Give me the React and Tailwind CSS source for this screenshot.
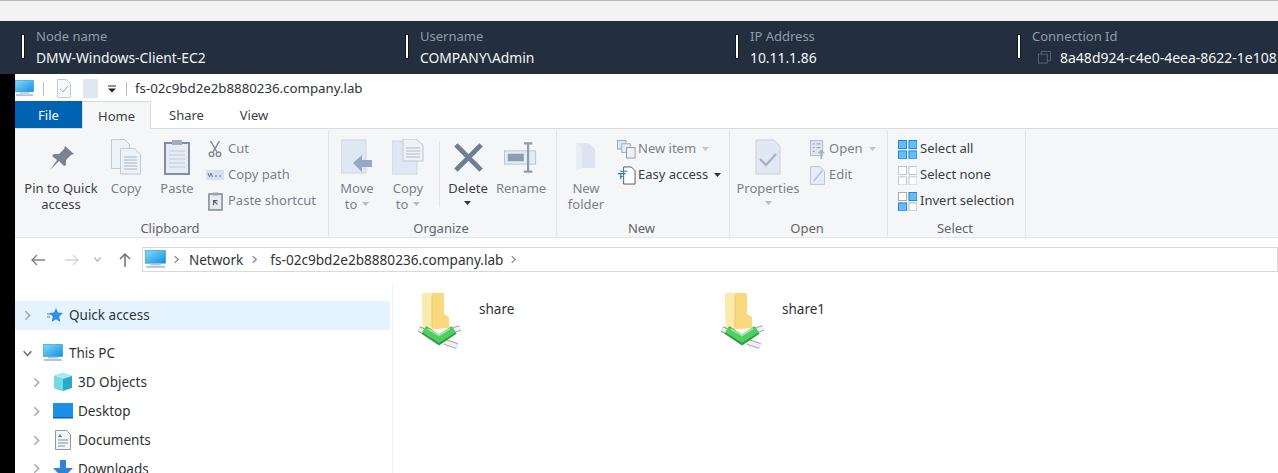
import React from 'react'

const font = 'font-["Noto_Sans","Open_Sans",sans-serif]'

function PcIcon({ className = 'w-5 h-5' }) {
  return (
    <svg viewBox="0 0 20 20" className={className}>
      <defs>
        <linearGradient id="pcScreen" x1="0" y1="0" x2="1" y2="1">
          <stop offset="0" stopColor="#7fdcfb" />
          <stop offset="1" stopColor="#1590e0" />
        </linearGradient>
      </defs>
      <rect x="0.5" y="1.5" width="19" height="12" fill="url(#pcScreen)" stroke="#2b8fd0" strokeWidth="0.6" />
      <rect x="5" y="14" width="10" height="1.5" fill="#b9c6d3" />
      <rect x="1" y="16" width="18" height="2" fill="#b5c4d4" />
    </svg>
  )
}

function Chevron({ className = '', down = false, color = '#a6a6a6' }) {
  return (
    <svg viewBox="0 0 10 10" className={className} fill="none" stroke={color} strokeWidth="1.3">
      {down ? <path d="M1.5 3 5 6.8 8.5 3" /> : <path d="M3 1.2 7 5 3 8.8" />}
    </svg>
  )
}

function Caret({ className = '', color = '#b8bdc2' }) {
  return (
    <svg viewBox="0 0 7 4" className={`w-[7px] h-1 ${className}`}>
      <path d="M0 0h7L3.5 4z" fill={color} />
    </svg>
  )
}

function HeaderField({ width, label, value, copy }) {
  return (
    <div className="flex shrink-0 items-center" style={{ width }}>
      <div className="w-[2px] h-[23px] bg-white shadow-[0_0_0_1px_#10161f] mr-[12px] shrink-0" />
      <div className="flex flex-col whitespace-nowrap">
        <span className="text-[13px] leading-[22px] text-[#8f9ca8]">{label}</span>
        <span className={`${copy ? 'text-[14px]' : 'text-[13.850px]'} leading-[22px] text-[#f3f5f6] flex items-center`}>
          {copy && (
            <svg viewBox="0 0 14 14" className="w-[13px] h-[13px] ml-[6px] mr-[9px]" fill="none" stroke="#5c6975" strokeWidth="1">
              <rect x="0.5" y="3.5" width="9.5" height="9.5" />
              <path d="M3.5 3.5v-3h10v10h-3.5" />
            </svg>
          )}
          {value}
        </span>
      </div>
    </div>
  )
}

function PinIcon() {
  return (
    <svg viewBox="0 0 26 24" className="w-[26px] h-6 mt-[2px]">
      <path d="M17 0l9 8-3 1-5 5 0 5-2 1-5-5-9 9 7-10-5-4 2-2 5 0 5-5z" fill="#7b848e" />
    </svg>
  )
}

function CopyIcon() {
  return (
    <svg viewBox="0 0 30 36" className="w-[30px] h-9" fill="#edf1f8" stroke="#c0cad8">
      <path d="M0.500 0.500h13l5 5v24h-18z" />
      <path d="M9.500 9.500h14l6 6v19.500h-20z" />
      <path d="M13 18h13M13 21h13M13 24h13M13 27h13M13 30h13" stroke="#a9b4c3" />
    </svg>
  )
}

function PasteIcon() {
  return (
    <svg viewBox="0 0 26 36" className="w-[26px] h-9">
      <rect x="1" y="4" width="24" height="31" fill="#e6ecf5" stroke="#7f8ea3" strokeWidth="2" />
      <rect x="8" y="1" width="10" height="5" fill="#a3aebd" />
      <path d="M5 12h16M5 16h16M5 20h16M5 24h16M5 28h16" stroke="#c2cad5" />
    </svg>
  )
}

function MoveIcon() {
  return (
    <svg viewBox="0 0 32 36" className="w-8 h-9">
      <rect x="0" y="1" width="25" height="33" fill="#dfe7f3" stroke="#cdd6e2" />
      <path d="M12 24l9-8v5h10v7H21v5z" fill="#97a9c2" />
    </svg>
  )
}

function CopyToIcon() {
  return (
    <svg viewBox="0 0 32 36" className="w-8 h-9">
      <rect x="0" y="2" width="25" height="33" fill="#dfe7f3" stroke="#cdd6e2" />
      <path d="M11 0h13l7 6v16H11z" fill="#eef2f7" stroke="#bcc6d2" />
      <path d="M14 9h14M14 12h14M14 15h14M14 18h14" stroke="#b0bac6" />
    </svg>
  )
}

function DeleteIcon() {
  return (
    <svg viewBox="0 0 32 32" className="w-[31px] h-[31px]" fill="none" stroke="#6e7f95" strokeWidth="5">
      <path d="M3 3l26 26M29 3L3 29" />
    </svg>
  )
}

function RenameIcon() {
  return (
    <svg viewBox="0 0 36 32" className="w-[34px] h-[31px]">
      <rect x="0.5" y="9" width="33" height="14" fill="#e6ecf4" stroke="#b8c4d2" />
      <rect x="4" y="12" width="17" height="8" fill="#8d9cb0" />
      <path d="M21 1h9M21 31h9M25.5 1v30" stroke="#8d9cb0" strokeWidth="2.4" fill="none" />
    </svg>
  )
}

function FolderIcon() {
  return (
    <svg viewBox="0 0 24 32" className="w-[23px] h-[31px]">
      <path d="M1 1h13l7 6v20H7l-6 3z" fill="#dbe4f0" />
      <path d="M1 1l6 5v21l-6 3z" fill="#e9eef6" />
    </svg>
  )
}

function PropertiesIcon() {
  return (
    <svg viewBox="0 0 26 36" className="w-[26px] h-9">
      <path d="M1 1h18l6 6v28H1z" fill="#e1e8f3" stroke="#c5d0de" />
      <path d="M5 20l6 6 10-11" fill="none" stroke="#a9b3bf" strokeWidth="2.4" />
    </svg>
  )
}

function LargeButton({ width, icon, lines, caret, disabled = true }) {
  return (
    <div className="flex flex-col items-center shrink-0" style={{ width }}>
      <div className="h-[42px] mt-[5px] flex items-center justify-center">{icon}</div>
      <div className={`mt-[2px] text-[13px] leading-[16px] text-center whitespace-nowrap ${disabled ? 'text-[#79828c]' : 'text-[#3a3f44]'}`}>
        {lines.map((l, i) => (
          <div key={i} className="flex items-center justify-center gap-[5px]">
            {l}
            {caret === 'inline' && i === lines.length - 1 && <Caret />}
          </div>
        ))}
        {caret === 'below' && (
          <div className="flex justify-center pt-[5px]">
            <Caret color={disabled ? '#b8bdc2' : '#333'} />
          </div>
        )}
      </div>
    </div>
  )
}

function SmallRow({ icon, label, caret, dark, iconWidth = 'w-[26px]' }) {
  return (
    <div className="flex h-[26px] items-center whitespace-nowrap">
      <div className={`${iconWidth} flex justify-center shrink-0`}>{icon}</div>
      <span className={`text-[13px] ${dark ? 'text-[#3a3f44]' : 'text-[#79828c]'}`}>{label}</span>
      {caret && <Caret className="ml-[6px]" color={dark ? '#333' : '#c2c6ca'} />}
    </div>
  )
}

function Group({ width, label, children }) {
  return (
    <div className="flex flex-col shrink-0 h-[106px] border-r border-[#e2e4e7]" style={{ width }}>
      <div className="flex h-[90px]">{children}</div>
      <div className="text-[13px] leading-[18px] text-center text-[#5e656c] pr-[3px]">{label}</div>
    </div>
  )
}

const Cut = (
  <svg viewBox="0 0 16 20" className="w-[14px] h-[18px]" fill="none" stroke="#7f8994" strokeWidth="1.6">
    <path d="M3 1l7 12M13 1L6 13" />
    <circle cx="4" cy="16" r="2.6" />
    <circle cx="12" cy="16" r="2.6" />
  </svg>
)
const CopyPath = (
  <svg viewBox="0 0 18 10" className="w-[18px] h-[10px]">
    <rect width="18" height="10" fill="#d7dff0" />
    <path d="M2 3l1.5 4L5 3l1.5 4M9 6h2M13 6h2" stroke="#6c7c9c" fill="none" />
  </svg>
)
const PasteShortcut = (
  <svg viewBox="0 0 16 20" className="w-[15px] h-[19px]">
    <rect x="1" y="2" width="14" height="17" fill="#e5ebf3" stroke="#76828f" strokeWidth="1.5" />
    <rect x="5" y="0.5" width="6" height="3" fill="#98a2ad" />
    <path d="M6 14V9h4M6 9l4 4" stroke="#57616c" strokeWidth="1.3" fill="none" />
  </svg>
)
const NewItem = (
  <svg viewBox="0 0 20 20" className="w-[19px] h-[19px]">
    <rect x="0.5" y="0.5" width="9" height="9" fill="#dfe6f0" stroke="#9aa6b5" />
    <rect x="5" y="4" width="9" height="9" fill="#e9eef5" stroke="#9aa6b5" />
    <rect x="10" y="8" width="9" height="11" fill="#eef2f7" stroke="#8e9aa9" />
  </svg>
)
const EasyAccess = (
  <svg viewBox="0 0 20 20" className="w-[19px] h-[19px]">
    <path d="M7 1h8l4 4v14H7z" fill="#fff" stroke="#555" />
    <path d="M1 8h8M3 5.500h8M3 11h3M4 8v6" stroke="#1d7fd0" strokeWidth="1.2" fill="none" />
  </svg>
)
const OpenIcon = (
  <svg viewBox="0 0 16 20" className="w-[15px] h-[19px]">
    <rect x="0.5" y="0.5" width="13" height="16" fill="#dfe6f0" stroke="#b0bbc9" />
    <path d="M3 4h2M3 8h2M3 12h2M7 4h4M7 8h4" stroke="#8493a5" />
    <path d="M11 20v-6H8l4-4 4 4h-3v6z" fill="#a5b3c5" />
  </svg>
)
const EditIcon = (
  <svg viewBox="0 0 16 20" className="w-[15px] h-[19px]">
    <path d="M0.500 0.500h10l5 5v14H0.500z" fill="#e8edf5" stroke="#b6c1cf" />
    <path d="M4 16L13 5" stroke="#b4c1d1" strokeWidth="1.6" />
  </svg>
)

function GridIcon({ cells, light }) {
  return (
    <svg viewBox="0 0 20 20" className="w-[19px] h-[19px]">
      {[[0, 0], [11, 0], [0, 11], [11, 11]].map(([x, y], i) => (
        <rect
          key={i}
          x={x + 0.5}
          y={y + 0.5}
          width="8.5"
          height="8.5"
          fill={cells[i] ? '#67bdf3' : '#fff'}
          stroke={cells[i] ? '#1b86d3' : light ? '#c4c4c4' : '#a9a9a9'}
        />
      ))}
    </svg>
  )
}

function NavRow({ indent, open, icon, label, bg, iconPad = 'pr-[6px]' }) {
  return (
    <div className={`flex items-center h-[28.900px] ${bg || ''}`}>
      <div className={`flex shrink-0 ${indent ? 'w-[33px] pl-[16px]' : 'w-[24px] pl-[7px]'}`}>
        <Chevron className="w-[11px] h-[11px]" down={open} color={open ? '#666' : '#a6a6a6'} />
      </div>
      <div className={`w-[30px] ${iconPad} flex justify-end shrink-0`}>{icon}</div>
      <span className="text-[13.500px] text-[#2f3338] whitespace-nowrap">{label}</span>
    </div>
  )
}

function ShareItem({ label }) {
  return (
    <div className="flex w-[303px] shrink-0">
      <svg viewBox="0 0 44 60" className="w-[44px] h-[60px] shrink-0">
        <path d="M4 2h22v21l5 3v11L8 39H5z" fill="#f8d97f" />
        <path d="M4 2h10v35l-6 2H5z" fill="#fce9ad" />
        <path d="M14 5v31" stroke="#efc868" strokeWidth="1" />
        <path d="M1 38l6 3M36 39l6-2M27 51l12 4" stroke="#8f9793" strokeWidth="6" fill="none" />
        <path d="M1 38l6 3M36 39l6-2M27 51l12 4" stroke="#eef1ef" strokeWidth="4" fill="none" />
        <path d="M6 39l15 10 15-10" fill="none" stroke="#2f9e45" strokeWidth="9" />
        <path d="M6 38.500l15 9.500 15-9.500" fill="none" stroke="#4fcf60" strokeWidth="6.500" />
        <path d="M10 38l11 6.500 11-7" fill="none" stroke="#9be8a5" strokeWidth="1.500" />
      </svg>
      <span className="ml-[17px] mt-[9px] text-[13.500px] leading-[18px] text-[#2f3338]">{label}</span>
    </div>
  )
}

export default function App() {
  return (
    <div className={`w-[1278px] h-[473px] overflow-hidden bg-white flex flex-col ${font}`}>
      {/* browser strip */}
      <div className="h-[21px] shrink-0 bg-[#f3f3f3] border-t border-[#b9bcbe]" />

      {/* session header */}
      <div className="h-[53px] shrink-0 bg-[#232f3e] flex items-center pl-[22px] pb-[2px] overflow-hidden">
        <HeaderField width={384} label="Node name" value="DMW-Windows-Client-EC2" />
        <HeaderField width={330} label="Username" value="COMPANY\Admin" />
        <HeaderField width={282} label="IP Address" value="10.11.1.86" />
        <HeaderField width={260} label="Connection Id" value="8a48d924-c4e0-4eea-8622-1e108" copy />
      </div>

      <div className="flex flex-1 min-h-0">
        <div className="w-[15px] shrink-0 bg-black" />
        <div className="flex-1 min-w-0 flex flex-col">
          {/* title bar */}
          <div className="h-[27px] shrink-0 flex items-center pt-[2px]">
            <PcIcon className="w-[19px] h-[19px]" />
            <div className="w-px h-[14px] bg-[#bdbdbd] ml-[9px]" />
            <svg viewBox="0 0 14 19" className="w-[14px] h-[19px] ml-[13px]" fill="none">
              <path d="M0.500 0.500h9l4 4v14h-13z" fill="#f5f7fa" stroke="#c2ccd8" />
              <path d="M3 10l3 3 5-6" stroke="#a7b1bd" />
            </svg>
            <div className="w-[15px] h-[19px] bg-[#dfe7f3] ml-[12px]" />
            <svg viewBox="0 0 8 8" className="w-2 h-2 ml-[10px]">
              <path d="M0 1h8" stroke="#222" />
              <path d="M0 3.500h8L4 7.500z" fill="#222" />
            </svg>
            <div className="w-px h-[14px] bg-[#bdbdbd] ml-[10px]" />
            <span className="ml-2 text-[13.270px] text-[#2f3338]">fs-02c9bd2e2b8880236.company.lab</span>
          </div>

          {/* tabs */}
          <div className="h-[28px] shrink-0 flex border-b border-[#dadbdc] text-[13px]">
            <div className="w-[67px] bg-[#0063b1] text-white flex items-center justify-center pt-[2px]">File</div>
            <div className="w-[69px] h-[28px] bg-[#f5f6f7] border-x border-t border-[#dadbdc] flex items-center justify-center text-[#3a3f44] pt-[2px]">Home</div>
            <div className="w-[71px] flex items-center justify-center text-[#3a3f44] pt-[2px]">Share</div>
            <div className="w-[64px] flex items-center justify-center text-[#3a3f44] pt-[2px]">View</div>
          </div>

          {/* ribbon */}
          <div className="h-[109px] shrink-0 bg-[#f5f6f7] border-b border-[#e3e4e6] flex pt-[2px]">
            <Group width={314} label="Clipboard">
              <div className="w-[7px]" />
              <LargeButton width={78} icon={<PinIcon />} lines={['Pin to Quick', 'access']} disabled={false} />
              <LargeButton width={52} icon={<CopyIcon />} lines={['Copy']} />
              <LargeButton width={50} icon={<PasteIcon />} lines={['Paste']} />
              <div className="pt-[5px]">
                <SmallRow icon={Cut} label="Cut" />
                <SmallRow icon={CopyPath} label="Copy path" />
                <SmallRow icon={PasteShortcut} label="Paste shortcut" />
              </div>
            </Group>
            <Group width={228} label="Organize">
              <LargeButton width={56} icon={<MoveIcon />} lines={['Move', 'to']} caret="inline" />
              <LargeButton width={46} icon={<CopyToIcon />} lines={['Copy', 'to']} caret="inline" />
              <div className="w-px h-[66px] bg-[#e2e4e7] mt-[10px] ml-[8px]" />
              <LargeButton width={56} icon={<DeleteIcon />} lines={['Delete']} caret="below" disabled={false} />
              <LargeButton width={50} icon={<RenameIcon />} lines={['Rename']} />
            </Group>
            <Group width={173} label="New">
              <LargeButton width={58} icon={<FolderIcon />} lines={['New', 'folder']} />
              <div className="pt-[5px]">
                <SmallRow icon={NewItem} label="New item" caret iconWidth="w-[23px]" />
                <SmallRow icon={EasyAccess} label="Easy access" caret dark iconWidth="w-[23px]" />
              </div>
            </Group>
            <Group width={158} label="Open">
              <LargeButton width={76} icon={<PropertiesIcon />} lines={['Properties']} caret="below" />
              <div className="pt-[5px]">
                <SmallRow icon={OpenIcon} label="Open" caret iconWidth="w-[23px]" />
                <SmallRow icon={EditIcon} label="Edit" iconWidth="w-[23px]" />
              </div>
            </Group>
            <Group width={138} label="Select">
              <div className="pt-[5px] pl-[6px]">
                <SmallRow icon={<GridIcon cells={[1, 1, 1, 1]} />} label="Select all" dark />
                <SmallRow icon={<GridIcon cells={[0, 0, 0, 0]} light />} label="Select none" dark />
                <SmallRow icon={<GridIcon cells={[0, 1, 1, 0]} />} label="Invert selection" dark />
              </div>
            </Group>
          </div>

          {/* address row */}
          <div className="h-[25px] mt-[9px] shrink-0 flex items-center">
            <svg viewBox="0 0 16 14" className="w-4 h-[14px] ml-[15px]" fill="none" stroke="#7d8187" strokeWidth="1.4">
              <path d="M15 7H2M7 2 2 7l5 5" />
            </svg>
            <svg viewBox="0 0 16 14" className="w-4 h-[14px] ml-[18px]" fill="none" stroke="#d3d5d7" strokeWidth="1.4">
              <path d="M1 7h13M9 2l5 5-5 5" />
            </svg>
            <Chevron className="w-[9px] h-[9px] ml-[13px]" down color="#a9abad" />
            <svg viewBox="0 0 14 16" className="w-[14px] h-4 ml-[16px]" fill="none" stroke="#6f7277" strokeWidth="1.5">
              <path d="M7 15V2M2 7l5-5 5 5" />
            </svg>
            <div className="flex-1 h-[25px] ml-[10px] border border-[#d9d9d9] flex items-center pl-[2px]">
              <PcIcon className="w-[21px] h-[21px]" />
              <Chevron className="w-[9px] h-[9px] ml-[6px]" color="#7d8187" />
              <span className="ml-[8px] pt-px text-[13.500px] text-[#2f3338]">Network</span>
              <Chevron className="w-[9px] h-[9px] ml-[7px]" color="#7d8187" />
              <span className="ml-[11px] pt-px text-[13.600px] text-[#2f3338]">fs-02c9bd2e2b8880236.company.lab</span>
              <Chevron className="w-[9px] h-[9px] ml-[6px]" color="#7d8187" />
            </div>
          </div>

          {/* body */}
          <div className="flex-1 min-h-0 flex mt-[11px]">
            <div className="w-[378px] shrink-0 border-r border-[#f0f0f0] pt-[18px] overflow-hidden">
              <div className="pr-[2px]">
                <NavRow
                  bg="bg-[#e5f3ff]"
                  icon={
                    <svg viewBox="0 0 16 16" className="w-4 h-4">
                      <path d="M9 1l2 4.600 5 .5-3.800 3.300L13.300 15 9 12.300 4.700 15l1.100-5.600L2 6.100l5-.5z" fill="#2f8fe0" />
                      <path d="M0 7h4M0 10h3" stroke="#2f8fe0" />
                    </svg>
                  }
                  label="Quick access"
                />
              </div>
              <div className="h-[9px]" />
              <NavRow open icon={<PcIcon className="w-[20px] h-[20px]" />} label="This PC" />
              <NavRow
                indent
                iconPad="pr-[5px]"
                icon={
                  <svg viewBox="0 0 20 20" className="w-5 h-5">
                    <path d="M10 1l9 3v12l-9 3-9-3V4z" fill="#2aa9c9" />
                    <path d="M1 4l9 3 9-3-9-3z" fill="#a8ecf2" />
                    <path d="M1 4l9 3v12l-9-3z" fill="#6fdbe6" />
                  </svg>
                }
                label="3D Objects"
              />
              <NavRow
                indent
                iconPad="pr-[5px]"
                icon={
                  <svg viewBox="0 0 20 16" className="w-5 h-4">
                    <rect width="20" height="14" fill="#1d8fe6" />
                    <rect y="14" width="20" height="1.500" fill="#0c5fa8" />
                  </svg>
                }
                label="Desktop"
              />
              <NavRow
                indent
                iconPad="pr-[7px]"
                icon={
                  <svg viewBox="0 0 16 20" className="w-4 h-5">
                    <path d="M0.500 0.500h11l4 4v15h-15z" fill="#f4f6f8" stroke="#8f979f" />
                    <path d="M3 10h10M3 13h10M3 16h7" stroke="#7c8f9f" />
                    <path d="M3 7l2-3 2 3z" fill="#2f8fe0" />
                  </svg>
                }
                label="Documents"
              />
              <NavRow
                indent
                iconPad="pr-[5px]"
                icon={
                  <svg viewBox="0 0 20 18" className="w-5 h-[18px]">
                    <path d="M7 0h6v8h7l-10 10L0 8h7z" fill="#2f83d8" />
                  </svg>
                }
                label="Downloads"
              />
            </div>
            <div className="flex-1 flex pl-[25px] pt-[8px]">
              <ShareItem label="share" />
              <ShareItem label="share1" />
            </div>
          </div>
        </div>
      </div>
    </div>
  )
}
